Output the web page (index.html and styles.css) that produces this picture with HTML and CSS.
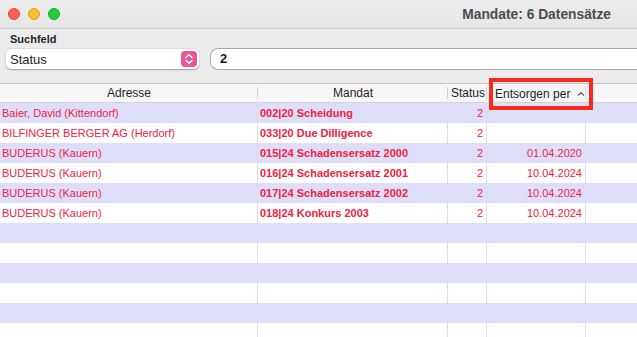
FILE: index.html
```html
<!DOCTYPE html>
<html lang="de">

<head>
  <meta charset="UTF-8">
  <title>Mandate</title>
  <link rel="stylesheet" href="styles.css">
</head>

<body>
  <div class="window">
    <div class="titlebar">
      <div class="lights">
        <span class="light red"></span>
        <span class="light yellow"></span>
        <span class="light green"></span>
      </div>
      <div class="title">Mandate: 6 Datensätze</div>
    </div>

    <div class="search">
      <div class="label">Suchfeld</div>
      <div class="controls">
        <div class="popup">
          <span>Status</span>
          <span class="stepper">
            <svg width="10" height="12" viewBox="0 0 10 12">
              <path d="M2 4.5 L5 1.8 L8 4.5 M2 7.5 L5 10.2 L8 7.5" fill="none" stroke="#fff" stroke-width="1.5" stroke-linecap="round" stroke-linejoin="round" />
            </svg>
          </span>
        </div>
        <div class="field">2</div>
      </div>
    </div>

    <div class="table">
      <div class="row head">
        <div class="cell c1">Adresse</div>
        <div class="cell c2">Mandat</div>
        <div class="cell c3">Status</div>
        <div class="cell c4">Entsorgen per <span class="caret">
            <svg width="8" height="6" viewBox="0 0 8 6">
              <path d="M1 4.5 L4 1.5 L7 4.5" fill="none" stroke="#555" stroke-width="1.2" />
            </svg></span></div>
        <div class="cell c5"></div>
      </div>
      <div class="row">
        <div class="cell c1">Baier, David (Kittendorf)</div>
        <div class="cell c2">002|20 Scheidung</div>
        <div class="cell c3">2</div>
        <div class="cell c4"></div>
        <div class="cell c5"></div>
      </div>
      <div class="row">
        <div class="cell c1">BILFINGER BERGER AG (Herdorf)</div>
        <div class="cell c2">033|20 Due Dilligence</div>
        <div class="cell c3">2</div>
        <div class="cell c4"></div>
        <div class="cell c5"></div>
      </div>
      <div class="row">
        <div class="cell c1">BUDERUS (Kauern)</div>
        <div class="cell c2">015|24 Schadensersatz 2000</div>
        <div class="cell c3">2</div>
        <div class="cell c4">01.04.2020</div>
        <div class="cell c5"></div>
      </div>
      <div class="row">
        <div class="cell c1">BUDERUS (Kauern)</div>
        <div class="cell c2">016|24 Schadensersatz 2001</div>
        <div class="cell c3">2</div>
        <div class="cell c4">10.04.2024</div>
        <div class="cell c5"></div>
      </div>
      <div class="row">
        <div class="cell c1">BUDERUS (Kauern)</div>
        <div class="cell c2">017|24 Schadensersatz 2002</div>
        <div class="cell c3">2</div>
        <div class="cell c4">10.04.2024</div>
        <div class="cell c5"></div>
      </div>
      <div class="row">
        <div class="cell c1">BUDERUS (Kauern)</div>
        <div class="cell c2">018|24 Konkurs 2003</div>
        <div class="cell c3">2</div>
        <div class="cell c4">10.04.2024</div>
        <div class="cell c5"></div>
      </div>
      <div class="row empty"><div class="cell c1"></div><div class="cell c2"></div><div class="cell c3"></div><div class="cell c4"></div><div class="cell c5"></div></div>
      <div class="row empty"><div class="cell c1"></div><div class="cell c2"></div><div class="cell c3"></div><div class="cell c4"></div><div class="cell c5"></div></div>
      <div class="row empty"><div class="cell c1"></div><div class="cell c2"></div><div class="cell c3"></div><div class="cell c4"></div><div class="cell c5"></div></div>
      <div class="row empty"><div class="cell c1"></div><div class="cell c2"></div><div class="cell c3"></div><div class="cell c4"></div><div class="cell c5"></div></div>
      <div class="row empty"><div class="cell c1"></div><div class="cell c2"></div><div class="cell c3"></div><div class="cell c4"></div><div class="cell c5"></div></div>
      <div class="row empty"><div class="cell c1"></div><div class="cell c2"></div><div class="cell c3"></div><div class="cell c4"></div><div class="cell c5"></div></div>

      <div class="marker"></div>
    </div>
  </div>
</body>

</html>
```

FILE: styles.css
```css
body {
  margin: 0;
  font-family: "Liberation Sans", Arial, sans-serif;
  background: #ececec;
  overflow: hidden;
}

.window {
  width: 637px;
  height: 337px;
  overflow: hidden;
  background: #ececec;
}

.titlebar {
  height: 28px;
  display: flex;
  align-items: center;
  justify-content: space-between;
  background: linear-gradient(#ededed, #e6e6e6);
  border-bottom: 1px solid #cfcfcf;
}

.lights {
  display: flex;
  gap: 8px;
  padding-left: 8px;
}

.light {
  width: 12px;
  height: 12px;
  border-radius: 50%;
  box-sizing: border-box;
}

.light.red {
  background: #fe5f57;
  border: 0.5px solid #e2463f;
}

.light.yellow {
  background: #febc2e;
  border: 0.5px solid #e1a116;
}

.light.green {
  background: #28c840;
  border: 0.5px solid #12ac28;
}

.title {
  font-size: 13.8px;
  font-weight: bold;
  color: #4d4d4d;
  padding-right: 26px;
}

.search {
  padding: 3px 0 0 10px;
  height: 55px;
  box-sizing: border-box;
  border-bottom: 1px solid #c6c6c6;
}

.label {
  font-size: 11px;
  font-weight: bold;
  color: #262626;
  height: 14px;
  line-height: 14px;
}

.controls {
  display: flex;
  align-items: center;
  gap: 11px;
  margin-left: -4px;
  margin-top: 2px;
}

.popup {
  width: 193px;
  height: 20px;
  box-sizing: border-box;
  background: #fff;
  border-radius: 5px;
  box-shadow: 0 0.5px 1.5px rgba(0, 0, 0, 0.35);
  display: flex;
  align-items: center;
  justify-content: space-between;
  padding: 0 2px 0 4px;
  font-size: 13px;
  color: #222;
}

.stepper {
  width: 16px;
  height: 16px;
  border-radius: 4px;
  background: #e8559a;
  display: flex;
  align-items: center;
  justify-content: center;
}

.field {
  flex: 1;
  height: 22px;
  box-sizing: border-box;
  background: #fff;
  border: 1px solid #a9a9a9;
  border-right: none;
  border-radius: 8px 0 0 8px;
  padding-left: 9px;
  font-size: 13px;
  font-weight: bold;
  line-height: 20px;
  color: #1a1a1a;
}

.table {
  position: relative;
  background: #fff;
}

.row {
  display: grid;
  grid-template-columns: 258px 190px 39px 99px 1fr;
  height: 20px;
  font-size: 11px;
  color: #f3213d;
}

.row:nth-child(even) {
  background: #dedefb;
}

.cell {
  line-height: 20px;
  white-space: nowrap;
  overflow: hidden;
  border-right: 1px solid #dcdcf5;
  box-sizing: border-box;
}

.c5 {
  border-right: none;
}

.c1 {
  padding-left: 2px;
}

.c2 {
  font-weight: bold;
  padding-left: 2px;
}

.c3,
.c4 {
  text-align: right;
  padding-right: 3px;
}

.row.head {
  height: 18px;
  background: #f6f6f6;
  color: #1f1f1f;
  font-size: 12px;
  border-bottom: 1px solid #d4d4d4;
  box-sizing: content-box;
}

.head .cell {
  line-height: 18px;
  text-align: center;
  font-weight: normal;
  border-right: none;
  position: relative;
  padding: 0;
}

.head .cell::after {
  content: "";
  position: absolute;
  right: 0;
  top: 3px;
  height: 12px;
  border-right: 1px solid #d3d3d3;
}

.head .c5::after {
  display: none;
}

.head .c3 {
  text-align: right;
  padding-right: 2px;
}

.head .c4 {
  text-align: left;
  padding-left: 8px;
}

.caret {
  margin-left: 3px;
  display: inline-block;
  vertical-align: 1px;
}

.marker {
  position: absolute;
  left: 489px;
  top: -6px;
  width: 104px;
  height: 32px;
  box-sizing: border-box;
  border: 4px solid #f9291d;
}
```
